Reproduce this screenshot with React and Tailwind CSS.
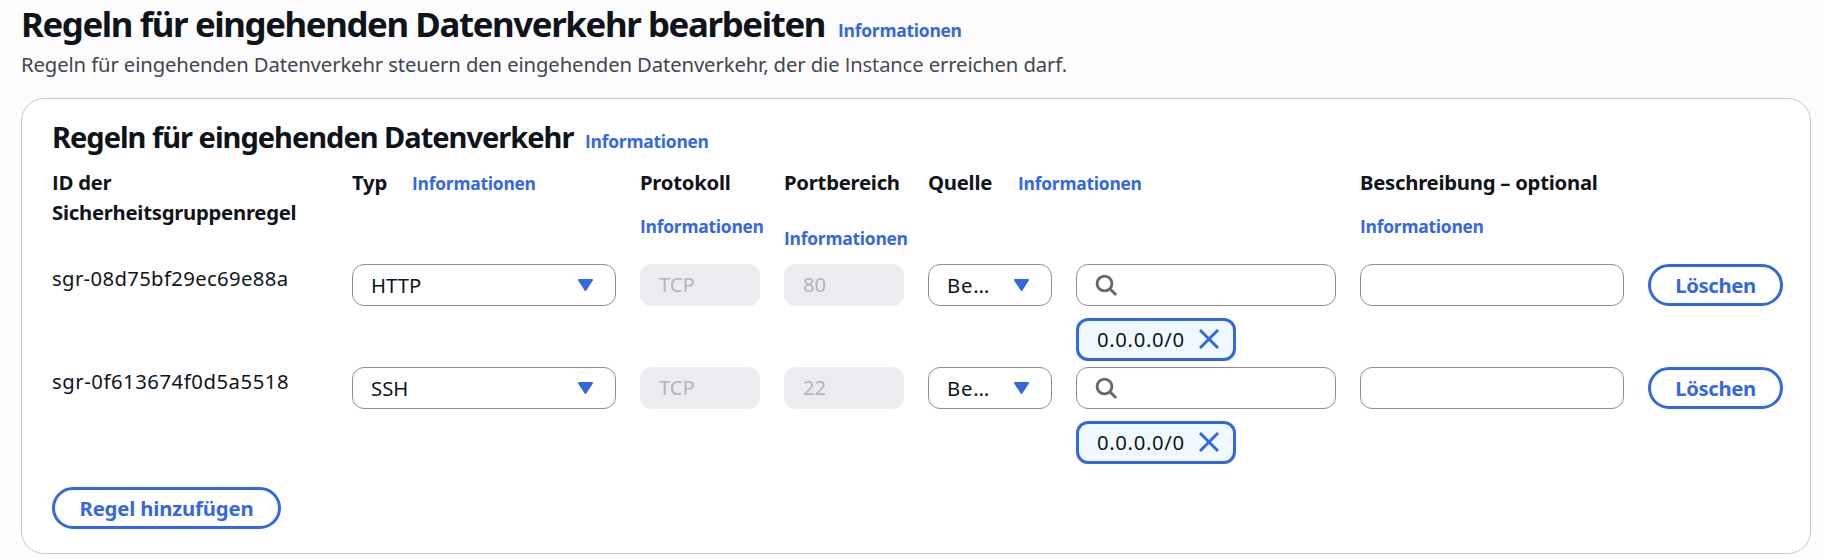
const rules = [
  { id: 'sgr-08d75bf29ec69e88a', tracking: 'tracking-[0.35px]', type: 'HTTP', protocol: 'TCP', port: '80', cidr: '0.0.0.0/0' },
  { id: 'sgr-0f613674f0d5a5518', tracking: 'tracking-[0.54px]', type: 'SSH', protocol: 'TCP', port: '22', cidr: '0.0.0.0/0' },
];

function InfoLink({ className = '' }) {
  return (
    <a className={`font-['Open_Sans',sans-serif] text-[17.4px] leading-[22px] font-bold tracking-[-0.24px] text-[#3468e0] ${className}`}>
      Informationen
    </a>
  );
}

function Caret() {
  return (
    <svg className="h-3 w-[15px] shrink-0" viewBox="0 0 15 12" fill="#3468e0" stroke="#3468e0" strokeWidth="2" strokeLinejoin="round">
      <path d="M1 1h13L7.5 11Z" />
    </svg>
  );
}

function Select({ children, className = '' }) {
  return (
    <button className={`flex h-[42px] items-center justify-between rounded-[12px] border border-[#8c8c94] bg-white pr-[22px] pl-[18px] ${className}`}>
      <span className="leading-[38px]">{children}</span>
      <Caret />
    </button>
  );
}

function DisabledField({ children }) {
  return (
    <div className="h-[42px] rounded-[12px] bg-[#ebebf0] px-[19px] leading-[41px] tracking-[-0.1px] text-[#b4b4bb]">{children}</div>
  );
}

function PillButton({ children, className = '' }) {
  return (
    <button className={`h-[42px] rounded-full border-3 border-[#3468e0] bg-white leading-[36px] font-bold text-[#3468e0] ${className}`}>
      {children}
    </button>
  );
}

function SearchField() {
  return (
    <div className="flex h-[42px] items-center rounded-[12px] border border-[#8c8c94] bg-white pl-[18px]">
      <svg className="h-6 w-6" viewBox="0 0 24 24" fill="none" stroke="#656871" strokeWidth="2.9">
        <circle cx="9.5" cy="10.5" r="7.4" />
        <path d="M14.8 15.8 21.2 22" />
      </svg>
    </div>
  );
}

function Token({ children }) {
  return (
    <div className="mt-3 flex h-[43px] w-40 items-center justify-between rounded-[12px] border-3 border-[#3468e0] bg-[#f0f9ff] pr-[14px] pl-[18px]">
      <span className="leading-[35px] tracking-[0.65px]">{children}</span>
      <svg className="-mt-px h-5 w-5" viewBox="0 0 20 20" fill="none" stroke="#3468e0" strokeWidth="2.9">
        <path d="M1 1 19 19M19 1 1 19" />
      </svg>
    </div>
  );
}

const columns = 'grid grid-cols-[276px_264px_120px_120px_124px_260px_264px_135px] gap-x-6';

export default function App() {
  return (
    <div className="h-[559px] overflow-hidden bg-[#fcfcfd] font-['Noto_Sans',sans-serif] text-[20.3px] text-[#0f141a]">
      <header className="pt-0.5 pl-[21px]">
        <div className="flex items-baseline">
          <h1 className="w-[817px] text-[34.8px] leading-[44px] font-bold tracking-[-1.38px] whitespace-nowrap">
            Regeln für eingehenden Datenverkehr bearbeiten
          </h1>
          <InfoLink />
        </div>
        <p className="mt-[3px] leading-[30px] tracking-[-0.12px] text-[#424650]">
          Regeln für eingehenden Datenverkehr steuern den eingehenden Datenverkehr, der die{' '}
          <span className="font-['Open_Sans',sans-serif]">Instance</span> erreichen darf.
        </p>
      </header>

      <main className="mt-[19px] ml-[21px] h-[456px] w-[1790px] rounded-[23px] border border-[#c6c6cd] bg-white pt-[18px] pl-[30px]">
        <div className="flex items-baseline">
          <h2 className="w-[533px] text-[29px] leading-[40px] font-bold tracking-[-1px] whitespace-nowrap">
            Regeln für eingehenden Datenverkehr
          </h2>
          <InfoLink />
        </div>

        <div className={`${columns} mt-[10px] h-[97px] leading-[30px] font-bold tracking-[-0.25px]`}>
          <div>
            <span className="font-['Open_Sans',sans-serif]">ID der</span>
            <br />
            Sicherheitsgruppenregel
          </div>
          <div className="flex items-baseline">
            <span className="w-[60px]">Typ</span>
            <InfoLink />
          </div>
          <div className="flex flex-col">
            Protokoll
            <InfoLink className="mt-[18px]" />
          </div>
          <div className="flex flex-col">
            Portbereich
            <InfoLink className="mt-[30px]" />
          </div>
          <div className="col-span-2 flex items-baseline">
            <span className="w-[90px]">Quelle</span>
            <InfoLink />
          </div>
          <div className="flex flex-col">
            Beschreibung – optional
            <InfoLink className="mt-[18px]" />
          </div>
        </div>

        {rules.map((rule) => (
          <div key={rule.id} className={`${columns} h-[103px] items-start`}>
            <span className={`leading-[29px] ${rule.tracking}`}>{rule.id}</span>
            <Select>{rule.type}</Select>
            <DisabledField>{rule.protocol}</DisabledField>
            <DisabledField>{rule.port}</DisabledField>
            <Select className="tracking-[0.8px]">Be…</Select>
            <div>
              <SearchField />
              <Token>{rule.cidr}</Token>
            </div>
            <div className="h-[42px] rounded-[12px] border border-[#8c8c94] bg-white" />
            <PillButton className="tracking-[-0.35px]">Löschen</PillButton>
          </div>
        ))}

        <PillButton className="mt-[17px] w-[229px] tracking-[-0.15px]">Regel hinzufügen</PillButton>
      </main>
    </div>
  );
}
